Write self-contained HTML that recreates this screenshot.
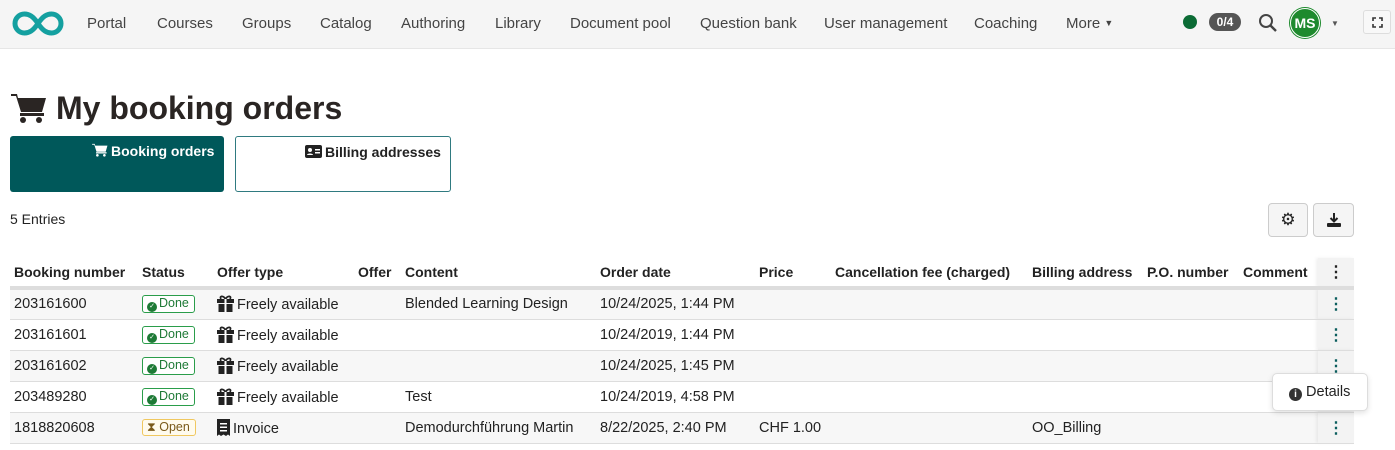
<!DOCTYPE html>
<html><head><meta charset="utf-8"><style>
*{box-sizing:border-box;margin:0;padding:0}
body{width:1395px;height:450px;overflow:hidden;background:#fff;font-family:"Liberation Sans",sans-serif;color:#222;font-size:14px;position:relative}
.nav{position:absolute;left:0;top:0;width:1395px;height:49px;background:#f5f5f5;border-bottom:1px solid #e6e6e6}
.nav span.i{position:absolute;top:15px;font-size:15px;color:#444}
.abs{position:absolute}
h1{position:absolute;left:56px;top:90px;font-size:32px;font-weight:bold;color:#2a2523}
.btn{position:absolute;top:136px;height:56px;border-radius:3px;font-weight:bold;font-size:14px}
table{position:absolute;left:10px;top:258px;border-collapse:collapse;width:1344px}
td,th{height:31px;padding:0 4px;text-align:left;white-space:nowrap;font-size:14.5px}
th{font-weight:bold;height:30px;border-bottom:4px solid #ddd;font-size:14px}
tbody tr{border-bottom:1px solid #ddd}
tbody tr:nth-child(odd){background:#f7f7f7}
.done{display:inline-block;border:1px solid #2a9d4a;color:#1e7a36;border-radius:3px;font-size:12.5px;padding:0 5px 0 4px;line-height:15px;background:#fff}
.open{display:inline-block;border:1px solid #f0c860;color:#7a5a1a;border-radius:3px;font-size:12.5px;padding:0 5px 0 4px;line-height:15px;background:#fffbee}
.dot{display:inline-block;width:10px;height:10px;border-radius:50%;background:#1e7a36;color:#fff;font-size:7px;line-height:10px;text-align:center;vertical-align:-1px;margin-right:2px}
.act{width:36px;text-align:center;background:#f3f3f3;box-shadow:-2px 0 3px rgba(0,0,0,.06)}
.k{color:#0b5e5e;font-weight:bold;font-size:16px}
.g{vertical-align:-3px;margin-right:3px}
</style></head><body>
<div class="nav">
<svg class="abs" style="left:11px;top:10px" width="54" height="27" viewBox="0 0 54 27"><path d="M27 13.5C22 6 18 4 13.5 4A9.5 9.5 0 0 0 13.5 23C18 23 22 21 27 13.5C32 6 36 4 40.5 4A9.5 9.5 0 0 1 40.5 23C36 23 32 21 27 13.5Z" fill="none" stroke="#14a0a0" stroke-width="5"/></svg>
<span class="i" style="left:87px">Portal</span><span class="i" style="left:157px">Courses</span><span class="i" style="left:242px">Groups</span><span class="i" style="left:320px">Catalog</span><span class="i" style="left:401px">Authoring</span><span class="i" style="left:495px">Library</span><span class="i" style="left:570px">Document pool</span><span class="i" style="left:700px">Question bank</span><span class="i" style="left:824px">User management</span><span class="i" style="left:974px">Coaching</span><span class="i" style="left:1066px">More <span style="font-size:9px;vertical-align:2px">▼</span></span>
<div class="abs" style="left:1183px;top:15px;width:14px;height:14px;border-radius:50%;background:#0b6b35"></div>
<div class="abs" style="left:1209px;top:13px;width:32px;height:18px;border-radius:9px;background:#555;color:#fff;font-size:12px;font-weight:bold;text-align:center;line-height:18px">0/4</div>
<svg class="abs" style="left:1258px;top:13px" width="20" height="20"><circle cx="8" cy="8" r="6" fill="none" stroke="#444" stroke-width="2"/><path d="M12.5 12.5L18 18" stroke="#444" stroke-width="2.4"/></svg>
<div class="abs" style="left:1290px;top:8px;width:30px;height:30px;border-radius:50%;background:#1e8a2e;border:1px solid #fff;box-shadow:0 0 0 1px #1e8a2e;color:#fff;font-size:14px;font-weight:bold;text-align:center;line-height:28px">MS</div>
<span class="abs" style="left:1331px;top:19px;font-size:8px;color:#555">▼</span>
<div class="abs" style="left:1363px;top:10px;width:28px;height:24px;border:1px solid #ddd;border-radius:3px;background:#f8f8f8"><svg class="abs" style="left:8px;top:6px" width="11" height="11" viewBox="0 0 11 11"><path d="M1 4V1h3M7 1h3v3M10 7v3H7M4 10H1V7" fill="none" stroke="#333" stroke-width="1.6"/></svg></div>
</div>
<svg class="abs" style="left:11px;top:92px" width="36" height="32" viewBox="0 0 36 32"><path d="M0 2h6l1 4h28l-4 14H10L5 4H0z" fill="#2a2523"/><rect x="9" y="21" width="24" height="3" fill="#2a2523"/><circle cx="12" cy="28" r="3" fill="#2a2523"/><circle cx="28" cy="28" r="3" fill="#2a2523"/></svg>
<h1>My booking orders</h1>
<div class="btn" style="left:10px;width:214px;background:#00585a;color:#fff"><svg class="abs" style="left:82px;top:7px" width="16" height="14" viewBox="0 0 36 32"><path d="M0 2h6l1 4h28l-4 14H10L5 4H0z" fill="#fff"/><rect x="9" y="21" width="24" height="3" fill="#fff"/><circle cx="12" cy="28" r="3" fill="#fff"/><circle cx="28" cy="28" r="3" fill="#fff"/></svg><span class="abs" style="left:101px;top:7px">Booking orders</span></div>
<div class="btn" style="left:235px;width:216px;border:1px solid #2f7a80;background:#fff;color:#222"><svg class="abs" style="left:69px;top:8px" width="17" height="13" viewBox="0 0 17 13"><rect width="17" height="13" rx="2" fill="#222"/><circle cx="5" cy="5" r="2" fill="#fff"/><path d="M2 10c0-2 6-2 6 0z" fill="#fff"/><rect x="10" y="4" width="5" height="1.5" fill="#fff"/><rect x="10" y="7" width="5" height="1.5" fill="#fff"/></svg><span class="abs" style="left:89px;top:7px">Billing addresses</span></div>
<div class="abs" style="left:10px;top:211px;font-size:14px">5 Entries</div>
<div class="abs" style="left:1268px;top:203px;width:40px;height:34px;border:1px solid #ccc;border-radius:4px;background:#f5f5f5;text-align:center;line-height:32px;font-size:17px">⚙</div>
<div class="abs" style="left:1313px;top:203px;width:41px;height:34px;border:1px solid #ccc;border-radius:4px;background:#f5f5f5"><svg class="abs" style="left:13px;top:9px" width="14" height="14" viewBox="0 0 14 14"><path d="M7 0v8M3.5 5L7 8.5 10.5 5" fill="none" stroke="#222" stroke-width="2"/><rect x="0" y="10" width="14" height="4" rx="1" fill="#222"/></svg></div>
<table>
<thead><tr><th style="width:128px">Booking number</th><th style="width:75px">Status</th><th style="width:141px">Offer type</th><th style="width:47px">Offer</th><th style="width:195px">Content</th><th style="width:159px">Order date</th><th style="width:76px">Price</th><th style="width:197px">Cancellation fee (charged)</th><th style="width:115px">Billing address</th><th style="width:96px">P.O. number</th><th>Comment</th><th class="act" style="font-size:16px">⋮</th></tr></thead>
<tbody>
<tr><td>203161600</td><td><span class="done"><span class="dot">✓</span>Done</span></td><td><svg class="g" width="17" height="17" viewBox="0 0 17 17"><path d="M8.5 4C6 0 2 1 4 4M8.5 4C11 0 15 1 13 4" fill="none" stroke="#222" stroke-width="1.8"/><rect x="0" y="4" width="17" height="4" fill="#222"/><rect x="1.5" y="9" width="14" height="8" fill="#222"/><rect x="7.5" y="4" width="2" height="13" fill="#fff"/></svg>Freely available</td><td></td><td>Blended Learning Design</td><td>10/24/2025, 1:44 PM</td><td></td><td></td><td></td><td></td><td></td><td class="act k">⋮</td></tr>
<tr><td>203161601</td><td><span class="done"><span class="dot">✓</span>Done</span></td><td><svg class="g" width="17" height="17" viewBox="0 0 17 17"><path d="M8.5 4C6 0 2 1 4 4M8.5 4C11 0 15 1 13 4" fill="none" stroke="#222" stroke-width="1.8"/><rect x="0" y="4" width="17" height="4" fill="#222"/><rect x="1.5" y="9" width="14" height="8" fill="#222"/><rect x="7.5" y="4" width="2" height="13" fill="#fff"/></svg>Freely available</td><td></td><td></td><td>10/24/2019, 1:44 PM</td><td></td><td></td><td></td><td></td><td></td><td class="act k">⋮</td></tr>
<tr><td>203161602</td><td><span class="done"><span class="dot">✓</span>Done</span></td><td><svg class="g" width="17" height="17" viewBox="0 0 17 17"><path d="M8.5 4C6 0 2 1 4 4M8.5 4C11 0 15 1 13 4" fill="none" stroke="#222" stroke-width="1.8"/><rect x="0" y="4" width="17" height="4" fill="#222"/><rect x="1.5" y="9" width="14" height="8" fill="#222"/><rect x="7.5" y="4" width="2" height="13" fill="#fff"/></svg>Freely available</td><td></td><td></td><td>10/24/2025, 1:45 PM</td><td></td><td></td><td></td><td></td><td></td><td class="act k">⋮</td></tr>
<tr><td>203489280</td><td><span class="done"><span class="dot">✓</span>Done</span></td><td><svg class="g" width="17" height="17" viewBox="0 0 17 17"><path d="M8.5 4C6 0 2 1 4 4M8.5 4C11 0 15 1 13 4" fill="none" stroke="#222" stroke-width="1.8"/><rect x="0" y="4" width="17" height="4" fill="#222"/><rect x="1.5" y="9" width="14" height="8" fill="#222"/><rect x="7.5" y="4" width="2" height="13" fill="#fff"/></svg>Freely available</td><td></td><td>Test</td><td>10/24/2019, 4:58 PM</td><td></td><td></td><td></td><td></td><td></td><td class="act k"></td></tr>
<tr><td>1818820608</td><td><span class="open">⧗ Open</span></td><td><svg class="g" width="13" height="17" viewBox="0 0 13 17"><path d="M0 0h13v17l-2-1.5-2 1.5-2.5-1.5L4 17l-2-1.5L0 17z" fill="#222"/><rect x="3" y="4" width="7" height="1.5" fill="#fff"/><rect x="3" y="7.5" width="7" height="1.5" fill="#fff"/><rect x="3" y="11" width="7" height="1.5" fill="#fff"/></svg>Invoice</td><td></td><td>Demodurchführung Martin</td><td>8/22/2025, 2:40 PM</td><td>CHF 1.00</td><td></td><td>OO_Billing</td><td></td><td></td><td class="act k">⋮</td></tr>
</tbody></table>
<div class="abs" style="left:1272px;top:373px;width:96px;height:38px;background:#fff;border:1px solid #ddd;border-radius:5px;box-shadow:0 2px 6px rgba(0,0,0,.12);font-size:14.5px;line-height:36px;padding-left:16px"><span style="display:inline-block;width:13px;height:13px;border-radius:50%;background:#333;color:#fff;font-size:10px;text-align:center;line-height:13px;font-weight:bold;vertical-align:-1px">i</span> Details</div>
</body></html>
